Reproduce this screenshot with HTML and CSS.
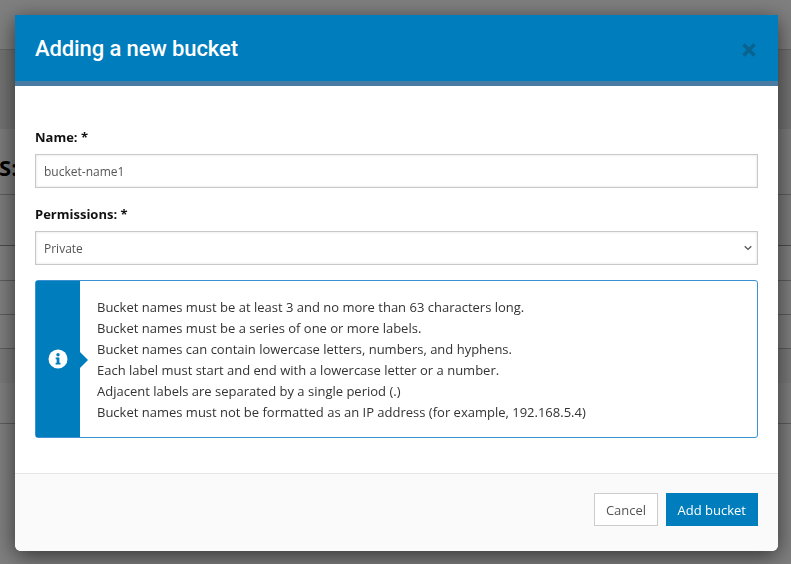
FILE: index.html
```html
<!DOCTYPE html>
<html lang="en">
	<head>
		<title>Buckets</title>
		<meta charset="utf-8">
		<link rel="stylesheet" href="styles.css">
	</head>
	<body>
		<div class="page">
			<div class="topbar"></div>
			<div class="subbar"></div>
			<div class="heading">BUCKETS:</div>
			<div class="row row-head"></div>
			<div class="row row-first"></div>
			<div class="row"></div>
			<div class="row"></div>
			<div class="row row-plain"></div>
			<div class="row row-tall"></div>
		</div>
		<div class="backdrop"></div>
		<div class="modal">
			<div class="modal-header">
				<h2>Adding a new bucket</h2>
				<span class="close">
					<svg width="14" height="14" viewBox="0 0 14 14"><path d="M1.5 1.5l11 11M12.5 1.5l-11 11" stroke="#0a628f" stroke-width="3.4" fill="none"/></svg>
				</span>
			</div>
			<div class="modal-body">
				<label class="field-label" for="name">Name: *</label>
				<input class="field" id="name" type="text" value="bucket-name1">
				<label class="field-label" for="perm">Permissions: *</label>
				<div class="select field" id="perm">
					<span>Private</span>
					<svg width="8" height="6" viewBox="0 0 9 6"><path d="M.8 1l3.7 3.6L8.2 1" stroke="#555" stroke-width="1.5" fill="none"/></svg>
				</div>
				<div class="notice">
					<div class="notice-side">
						<svg width="20" height="20" viewBox="0 0 20 20">
							<circle cx="10" cy="10" r="9.5" fill="#fff"/>
							<circle cx="10" cy="5.8" r="1.7" fill="#007dbc"/>
							<path d="M7.7 8.6h3.7v5.2h1.1v1.6H7.6v-1.6h1.1v-3.6h-1z" fill="#007dbc"/>
						</svg>
					</div>
					<ul class="notice-text">
						<li>Bucket names must be at least 3 and no more than 63 characters long.</li>
						<li>Bucket names must be a series of one or more labels.</li>
						<li>Bucket names can contain lowercase letters, numbers, and hyphens.</li>
						<li>Each label must start and end with a lowercase letter or a number.</li>
						<li>Adjacent labels are separated by a single period (.)</li>
						<li>Bucket names must not be formatted as an IP address (for example, 192.168.5.4)</li>
					</ul>
				</div>
			</div>
			<div class="modal-footer">
				<button class="btn">Cancel</button>
				<button class="btn btn-primary">Add bucket</button>
			</div>
		</div>
	</body>
</html>
```

FILE: styles.css
```css
html, body {
	margin: 0;
	height: 100%;
	overflow: hidden;
	font-family: "Open Sans", sans-serif;
	background: #fff;
}

.topbar {
	height: 49px;
	border-bottom: 1px solid #ccc;
	background: #fff;
}

.subbar {
	height: 79px;
	background: #e6e6e6;
}

.heading {
	box-sizing: border-box;
	height: 66px;
	line-height: 76px;
	font-size: 22px;
	font-weight: 700;
	color: #000;
	background: #f8f8f8;
	border-bottom: 1px solid #bbb;
	white-space: nowrap;
	text-indent: -86px;
}

.row {
	height: 33px;
	border-bottom: 1px solid #bbb;
}

.row-head {
	height: 50px;
	background: #f8f8f8;
	border-bottom-color: #999;
}

.row-first {
	height: 34px;
}

.row-plain {
	border-bottom: 0;
	height: 34px;
	background: #f4f4f4;
}

.row-tall {
	height: 40px;
}

.backdrop {
	position: fixed;
	inset: 0;
	background: rgba(0, 0, 0, .5);
}

.modal {
	position: fixed;
	left: 15px;
	top: 15px;
	width: 763px;
	height: 536px;
	display: flex;
	flex-direction: column;
	background: #fff;
	border-radius: 0 0 6px 6px;
	box-shadow: 0 5px 22px rgba(0, 0, 0, .6);
	overflow: hidden;
}

.modal-header {
	display: flex;
	justify-content: space-between;
	align-items: center;
	height: 66px;
	padding: 0 22px 0 20px;
	background: #007dbc;
	border-bottom: 5px solid #4a7ba3;
}

.modal-header h2 {
	margin: 0;
	color: #fff;
	font-size: 22px;
	font-weight: 500;
	letter-spacing: -.1px;
	font-family: Roboto, sans-serif;
}

.close {
	display: flex;
	margin-top: 3px;
}

.modal-body {
	flex: 1;
	padding: 42px 20px 0;
}

.field-label {
	display: block;
	font-size: 13px;
	line-height: 19px;
	font-weight: 700;
	color: #111;
	margin-bottom: 7px;
}

.field {
	display: flex;
	justify-content: space-between;
	align-items: center;
	box-sizing: border-box;
	width: 100%;
	height: 34px;
	margin: 0 0 17px;
	padding: 0 8px;
	border: 1px solid #c8c8c8;
	box-shadow: inset 0 0 3px rgba(0, 0, 0, .12);
	font-family: inherit;
	font-size: 12px;
	color: #555;
	background: #fff;
}

.select {
	padding-right: 5px;
}

.notice {
	display: flex;
	height: 158px;
	margin-top: -2px;
	border: 1px solid #3a93d0;
	border-radius: 3px;
	box-sizing: border-box;
}

.notice-side {
	position: relative;
	display: flex;
	align-items: center;
	justify-content: center;
	width: 44px;
	background: #007dbc;
	flex: none;
}

.notice-side::after {
	content: "";
	position: absolute;
	right: -8px;
	top: 71px;
	border-left: 8px solid #007dbc;
	border-top: 8px solid transparent;
	border-bottom: 8px solid transparent;
}

.notice-text {
	list-style: none;
	margin: 0;
	padding: 16px 0 0 17px;
	font-size: 13px;
	line-height: 21px;
	color: #333;
}

.modal-footer {
	display: flex;
	justify-content: flex-end;
	gap: 8px;
	height: 78px;
	box-sizing: border-box;
	padding: 19px 20px 0;
	background: #fafafa;
	border-top: 1px solid #e5e5e5;
}

.btn {
	height: 33px;
	padding: 0 10.5px;
	border: 1px solid #ccc;
	background: #fff;
	color: #555;
	font-family: inherit;
	font-size: 13px;
}

.btn-primary {
	padding: 0 11px;
	border-color: #007dbc;
	background: #007dbc;
	color: #fff;
}
```
